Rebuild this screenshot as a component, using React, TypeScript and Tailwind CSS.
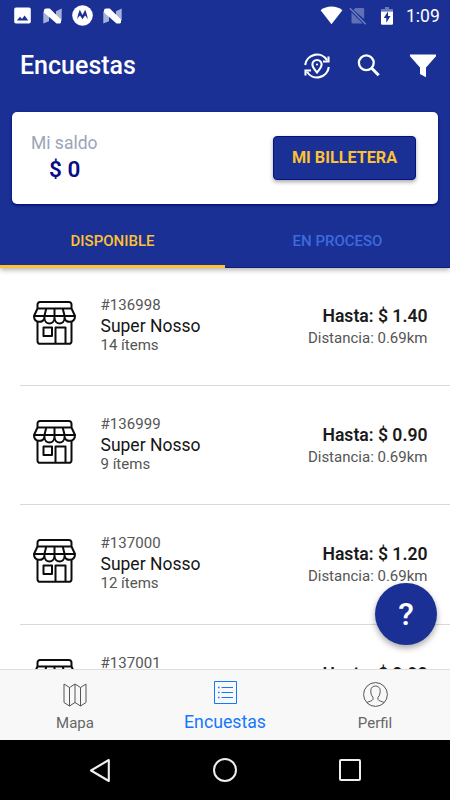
import React from "react";

type Survey = { id: string; store: string; items: string; upTo: string; distance: string };

const surveys: Survey[] = [
  { id: "#136998", store: "Super Nosso", items: "14 ítems", upTo: "Hasta: $ 1.40", distance: "Distancia: 0.69km" },
  { id: "#136999", store: "Super Nosso", items: "9 ítems", upTo: "Hasta: $ 0.90", distance: "Distancia: 0.69km" },
  { id: "#137000", store: "Super Nosso", items: "12 ítems", upTo: "Hasta: $ 1.20", distance: "Distancia: 0.69km" },
  { id: "#137001", store: "Super Nosso", items: "9 ítems", upTo: "Hasta: $ 0.90", distance: "Distancia: 0.69km" },
];

function NougatIcon() {
  return (
    <svg className="h-[16px] w-[19px]" viewBox="0 0 19 16">
      <path d="M.3 3.2 6 5.5v7.8L.3 15.5zM13 3.2 18.7.5v12L13 13.8z" fill="#a7b0db" />
      <path d="M1 2.2Q1 .4 3 .4h3.800L18 11.500v3.100l-1 .9h-3.500L1 4.500z" fill="#fff" />
    </svg>
  );
}

function StatusBar() {
  return (
    <div className="flex h-[31px] shrink-0 items-center text-white">
      <svg className="ml-[14px] h-[17px] w-[17px]" viewBox="0 0 17 17">
        <path fillRule="evenodd" fill="#fff" d="M2 .5h13a1.8 1.8 0 0 1 1.8 1.8v12.4a1.8 1.8 0 0 1-1.8 1.8H2a1.8 1.8 0 0 1-1.8-1.8V2.300A1.800 1.800 0 0 1 2 .5zM2.800 13.500h11.500l-3.700-5-2.600 3.500-2-2.300z" />
      </svg>
      <div className="ml-[12px] flex"><NougatIcon /></div>
      <svg className="ml-[10px] h-[21px] w-[21px]" viewBox="0 0 21 21">
        <circle cx="10.500" cy="10.500" r="10.300" fill="#fff" />
        <path d="M5.200 14.600C5.600 10.500 6.600 7.600 7.800 4.800L10.500 10l2.700-5.200c1.200 2.800 2.200 5.700 2.600 9.800-.8-2-1.700-3.200-2.800-4.200l-2.500 3.900L8 10.400c-1.100 1-2 2.200-2.800 4.200z" fill="#1a3094" />
      </svg>
      <div className="ml-[10px] flex"><NougatIcon /></div>
      <svg className="ml-auto h-[19px] w-[23px]" viewBox="0 0 23 19">
        <path d="M.6 4.200C6.500-.6 16.500-.6 22.400 4.200L11.500 18.300z" fill="#fff" />
      </svg>
      <svg className="ml-[6px] h-[18px] w-[18px]" viewBox="0 0 18 18">
        <path d="M6.500 1H14a1.200 1.200 0 0 1 1.200 1.200V12L4.400 3zM2.500 5.500 13.800 16.500H3.700a1.200 1.200 0 0 1-1.200-1.200z" fill="#5f70b5" />
        <path d="M.8 1.200 16.800 17.200" stroke="#7180bf" strokeWidth="1.400" />
      </svg>
      <svg className="ml-[14px] h-[18px] w-[12px]" viewBox="0 0 12 18">
        <path d="M4 0h4v2h4v2.600H0V2h4z" fill="#6b7abb" />
        <path d="M0 4.500h12v12a1.200 1.200 0 0 1-1.200 1.200H1.200A1.200 1.200 0 0 1 0 16.500z" fill="#fff" />
        <path d="M7 4.500 2.700 11H5.300v4.800L9.500 9H7z" fill="#1a3094" />
      </svg>
      <span className="mr-[9px] ml-[13px] w-[35px] text-[17.500px] leading-[20px] whitespace-nowrap">1:09</span>
    </div>
  );
}

function AppBar() {
  return (
    <div className="flex h-[69px] shrink-0 items-center text-white">
      <h1 className="ml-[20px] text-[25px] leading-[30px] font-medium">Encuestas</h1>
      <svg className="ml-auto h-[28px] w-[28px]" viewBox="0 0 28 28" fill="none" stroke="#fff" strokeWidth="2.100">
        <path d="M2.200 13A11.800 11.800 0 0 1 24 8.300M25.800 15A11.800 11.800 0 0 1 4 19.700" />
        <path d="M25.500 4.500v5h-5.500M2.500 23.500v-5H8" />
        <path d="M14 20.500c-2.600-3-4.600-5.500-4.600-7.900a4.600 4.600 0 0 1 9.200 0c0 2.400-2 4.900-4.600 7.900z" />
        <circle cx="14" cy="12.500" r="1.100" fill="#fff" stroke="none" />
      </svg>
      <svg className="ml-[26px] h-[24px] w-[24px]" viewBox="0 0 24 24" fill="none" stroke="#fff">
        <circle cx="9.300" cy="8.800" r="7.400" strokeWidth="2.300" />
        <path d="m14.500 14 7.200 7.200" strokeWidth="3" />
      </svg>
      <svg className="mr-[13px] ml-[28px] h-[24px] w-[28px]" viewBox="0 0 28 24">
        <path d="M1 0.500h26v1.800L17 13.500v9.800l-6-3.300v-6.500L1 2.300z" fill="#fff" />
      </svg>
    </div>
  );
}

function StoreIcon() {
  return (
    <svg className="mt-[34px] ml-[33px] h-[44px] w-[43px] shrink-0" viewBox="0 0 43 44" fill="none" stroke="#0c0c0c" strokeWidth="2" strokeLinejoin="round">
      <path d="M4.500 7.500V3.500A2.500 2.500 0 0 1 7 1h29a2.500 2.500 0 0 1 2.500 2.500V7.500zM4.500 7.500 1 15h41L38.500 7.500M13.300 7.500l-1.900 7.500M21.500 7.500V15M29.700 7.500l1.900 7.500" />
      <path d="M1 15c0 7.500 10.200 7.500 10.400 1.500 0 8 10 8 10.100 0 .1 8 10.100 8 10.100 0 .2 6 10.400 6 10.400-1.500" />
      <path d="M4.500 20v20A2.500 2.500 0 0 0 7 42.800h29a2.500 2.500 0 0 0 2.500-2.800V20M10.500 26.500h8.500v8.500h-8.500zM22.500 42.500V26.500h10v16" />
    </svg>
  );
}

function SurveyRow({ survey }: { survey: Survey }) {
  return (
    <div className="relative flex h-[119.200px] shrink-0">
      <StoreIcon />
      <div className="mt-[28px] ml-[24.500px] flex flex-col text-[#555]">
        <span className="text-[15px] leading-[20px] tracking-[0.050px]">{survey.id}</span>
        <span className="text-[17.500px] leading-[22px] text-[#151515]">{survey.store}</span>
        <span className="text-[15px] leading-[17px]">{survey.items}</span>
      </div>
      <div className="mt-[38px] mr-[22.500px] ml-auto flex flex-col items-end text-[#555]">
        <span className="text-[17.600px] leading-[22px] font-semibold text-[#1b1b1b]">{survey.upTo}</span>
        <span className="text-[15px] leading-[22px]">{survey.distance}</span>
      </div>
      <div className="absolute right-0 bottom-0 left-[20px] h-px bg-[#d9d9d9]" />
    </div>
  );
}

function BottomTabs() {
  return (
    <nav className="grid h-[71px] shrink-0 grid-cols-3 border-t border-[#dedede] bg-[#f8f8f8] text-[15px] text-[#666]">
      <div className="flex flex-col items-center">
        <svg className="mt-[13px] h-[24px] w-[24px]" viewBox="0 0 24 24" fill="none" stroke="#555" strokeWidth="1">
          <path d="M1 1 6.500 4.500 12 1l5.500 3.500L23 1v18.500l-5.500 3.500-5.500-3.500L6.500 23 1 19.500zM6.500 4.500V23M12 1v18.500M17.500 4.500V23" />
        </svg>
        <span className="mt-[6px] leading-[20px]">Mapa</span>
      </div>
      <div className="flex flex-col items-center text-[#1577fa]">
        <svg className="mt-[11px] h-[23px] w-[23px]" viewBox="0 0 23 23" fill="none" stroke="#1577fa" strokeWidth="1">
          <path d="M.5.500h22v22H.5zM7.500 6.500H19M7.500 11.500H19M7.500 16.500H19" />
          <path d="M4 6.500h1.500M4 11.500h1.500M4 16.500h1.500" strokeWidth="1.500" />
        </svg>
        <span className="mt-[8px] text-[17.700px] leading-[20px]">Encuestas</span>
      </div>
      <div className="flex flex-col items-center">
        <svg className="mt-[12px] h-[25px] w-[25px]" viewBox="0 0 25 25" fill="none" stroke="#555" strokeWidth="1">
          <circle cx="12.500" cy="12.500" r="11.900" />
          <path d="M4 20.500c2-1.200 5.500-1.500 6-3v-2.200C8 13.500 7.800 10.500 7.800 8.500c0-6 9.400-6 9.400 0 0 2-.2 5-2.200 6.800v2.200c.5 1.500 4 1.800 6 3" />
        </svg>
        <span className="mt-[6px] leading-[20px]">Perfil</span>
      </div>
    </nav>
  );
}

function SystemNav() {
  return (
    <div className="flex h-[60px] shrink-0 items-center bg-black">
      <svg className="ml-[89px] h-[25px] w-[22px]" viewBox="0 0 22 25" fill="none" stroke="#eee" strokeWidth="2.100" strokeLinejoin="round">
        <path d="M19.800 2v21L2 12.500z" />
      </svg>
      <div className="ml-[102px] h-[24px] w-[24px] rounded-full border-2 border-[#eee]" />
      <div className="ml-[102px] h-[22px] w-[22px] rounded-[2px] border-2 border-[#eee]" />
    </div>
  );
}

export default function App() {
  return (
    <div className="relative flex h-[800px] w-[450px] flex-col overflow-hidden bg-white font-['Roboto','Liberation_Sans',sans-serif]">
      <header className="relative z-10 flex h-[268px] shrink-0 flex-col bg-[#1a3094] shadow-[0_2px_5px_rgba(0,0,0,0.3)]">
        <StatusBar />
        <AppBar />
        <section className="mx-[12px] mt-[12px] flex h-[92px] shrink-0 items-center justify-between rounded-[5px] bg-white pr-[22px] pl-[19px] shadow-[0_1px_3px_#000070]">
          <div className="flex flex-col self-start pt-[19px]">
            <span className="text-[17.500px] leading-[24px] text-[#9aa5b8]">Mi saldo</span>
            <strong className="ml-[18px] text-[22.500px] leading-[29px] font-semibold text-[#080c87]">$ 0</strong>
          </div>
          <button className="h-[44px] w-[143px] rounded-[4px] border border-[#06107f] bg-[#1a3094] text-[16.200px] font-bold whitespace-nowrap text-[#fdc135] shadow-[0_2px_4px_rgba(0,0,0,0.35)]">MI BILLETERA</button>
        </section>
        <div className="grid flex-1 grid-cols-2 text-[15px] font-medium">
          <div className="flex items-center justify-center border-b-[3px] border-[#fdc135] pt-[13px] text-[#fdc135]">DISPONIBLE</div>
          <div className="flex items-center justify-center border-b border-[#101f76] pt-[11px] text-[#3b6bdc]">EN PROCESO</div>
        </div>
      </header>
      <main className="-mt-px flex min-h-0 flex-1 flex-col overflow-hidden">
        {surveys.map((s) => <SurveyRow key={s.id} survey={s} />)}
      </main>
      <BottomTabs />
      <SystemNav />
      <button className="absolute top-[583px] left-[375px] z-20 flex h-[62px] w-[62px] items-center justify-center rounded-full bg-[#1a3094] text-[32px] font-medium text-white shadow-[0_3px_6px_rgba(0,0,0,0.35)]">?</button>
    </div>
  );
}
